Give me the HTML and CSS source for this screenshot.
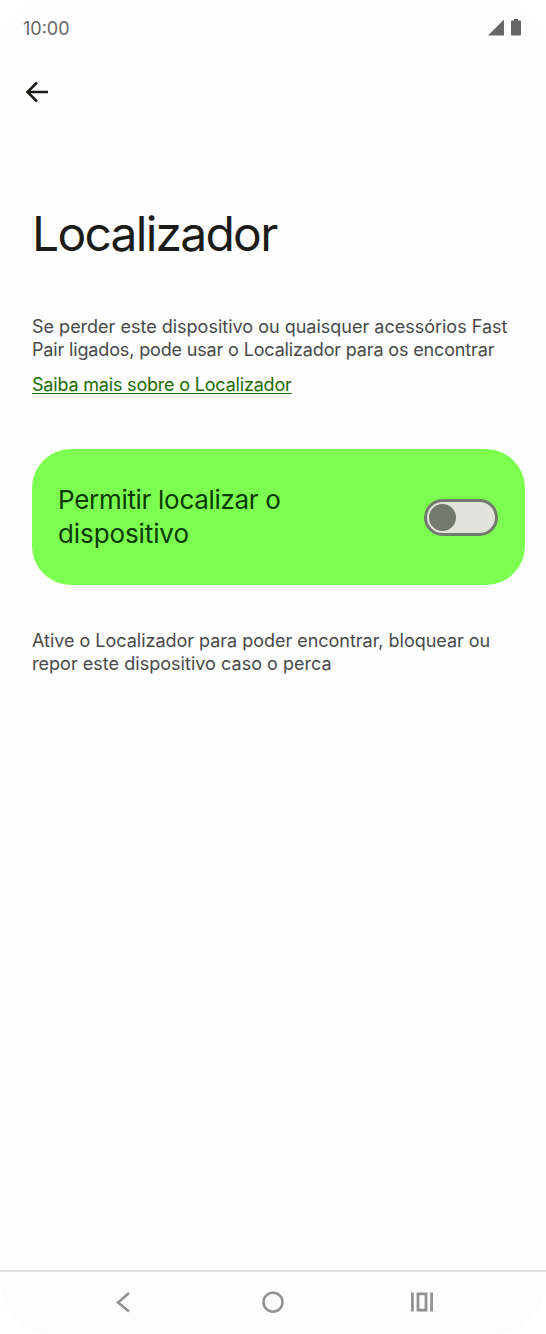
FILE: index.html
```html
<!DOCTYPE html>
<html lang="pt">
<head>
  <meta charset="UTF-8">
  <meta name="viewport" content="width=device-width, initial-scale=1.0">
  <title>Localizador</title>
  <link rel="stylesheet" href="styles.css">
</head>
<body>
  <div class="screen">
    <!-- Status bar -->
    <div class="status-bar">
      <span class="time">10:00</span>
      <svg class="status-icons" width="36" height="20" viewBox="0 0 36 20">
        <path d="M2 17.5 18 1.5v16z" fill="#666"/>
        <path d="M28 1h4v1.5h2q1 0 1 1v13q0 1-1 1h-8q-1 0-1-1v-13q0-1 1-1h2z" fill="#666"/>
      </svg>
    </div>

    <a class="back" href="#" aria-label="Voltar">
      <svg width="24" height="24" viewBox="0 0 24 24">
        <path d="M23 12H3M12 2.5 2.5 12l9.5 9.5" fill="none" stroke="#1b1c18" stroke-width="2.5"/>
      </svg>
    </a>

    <main class="content">
      <h1>Localizador</h1>

      <p class="text intro">
        <span class="intro-a">Se perder este dispositivo ou quaisquer acessórios Fast</span><br>
        <span class="intro-b">Pair ligados, pode usar o Localizador para os encontrar</span>
      </p>
      <a class="link" href="#">Saiba mais sobre o Localizador</a>

      <div class="card">
        <div class="card-title">
          <span class="card-a">Permitir localizar o</span><br>
          <span class="card-b">dispositivo</span>
        </div>
        <div class="switch"><div class="thumb"></div></div>
      </div>

      <p class="text note">
        <span class="note-a">Ative o Localizador para poder encontrar, bloquear ou</span><br>
        <span class="note-b">repor este dispositivo caso o perca</span>
      </p>
    </main>

    <!-- Navigation bar -->
    <nav class="nav-bar">
      <svg width="24" height="24" viewBox="0 0 24 24">
        <path d="M18 3 7 12.500 18 21.500" fill="none" stroke="#919191" stroke-width="2.500"/>
      </svg>
      <svg width="24" height="24" viewBox="0 0 24 24">
        <circle cx="12" cy="12.200" r="9.500" fill="none" stroke="#919191" stroke-width="2.500"/>
      </svg>
      <svg width="24" height="24" viewBox="0 0 24 24">
        <path d="M2.400 2.500v19M21.600 2.500v19M8 3.800h8v16.400H8z" fill="none" stroke="#919191" stroke-width="2.800"/>
      </svg>
    </nav>
  </div>
</body>
</html>
```

FILE: styles.css
```css
* {
  box-sizing: border-box;
}

body {
  margin: 0;
  background: #fff;
  font-family: Inter, "Liberation Sans", sans-serif;
}

.screen {
  display: flex;
  flex-direction: column;
  height: 1334px;
  background: #fefefe;
  border-radius: 54px;
  overflow: hidden;
}

/* Status bar */
.status-bar {
  display: flex;
  justify-content: space-between;
  height: 56px;
  padding: 18px 24px 0 23px;
}

.time {
  color: #666;
  font-size: 18px;
  line-height: 21px;
}

.back {
  display: block;
  height: 24px;
  margin: 24px 0 0 25px;
}

.content {
  flex: 1;
  padding: 0 21px 0 32px;
}

h1 {
  margin: 102px 0 0;
  color: #1b1c18;
  font-size: 48px;
  font-weight: 400;
  line-height: 56px;
  letter-spacing: -1.75px;
  white-space: nowrap;
}

.text {
  margin: 0;
  color: #48494a;
  font-size: 18px;
  line-height: 23px;
  white-space: nowrap;
}

.intro {
  margin-top: 53px;
}

.intro-b {
  letter-spacing: -0.15px;
}

.link {
  display: block;
  width: max-content;
  margin-top: 12px;
  color: #1b6b00;
  font-size: 18px;
  line-height: 23px;
  letter-spacing: -0.19px;
  text-decoration: underline;
  text-decoration-thickness: 1px;
  text-underline-offset: 2px;
}

/* Toggle card */
.card {
  display: flex;
  align-items: center;
  justify-content: space-between;
  height: 136px;
  margin-top: 53px;
  padding: 0 27px 0 26px;
  background: #7dff52;
  border-radius: 39px;
}

.card-title {
  color: #083900;
  font-size: 26px;
  line-height: 34px;
  white-space: nowrap;
}

.card-a {
  letter-spacing: -0.3px;
}

.card-b {
  letter-spacing: -0.1px;
}

.switch {
  width: 74px;
  height: 37px;
  padding: 2px;
  background: #e2e4db;
  border: 3px solid #72796d;
  border-radius: 19px;
}

.thumb {
  width: 27px;
  height: 27px;
  background: #72796d;
  border-radius: 50%;
}

.note {
  margin-top: 44px;
}

.note-a {
  letter-spacing: -0.02px;
}

.note-b {
  letter-spacing: 0.03px;
}

/* Navigation bar */
.nav-bar {
  display: flex;
  align-items: center;
  justify-content: space-between;
  height: 64px;
  padding: 0 112px 2px 111px;
  background: #fcfcfc;
  border-top: 2px solid #e3e3e3;
}
```
